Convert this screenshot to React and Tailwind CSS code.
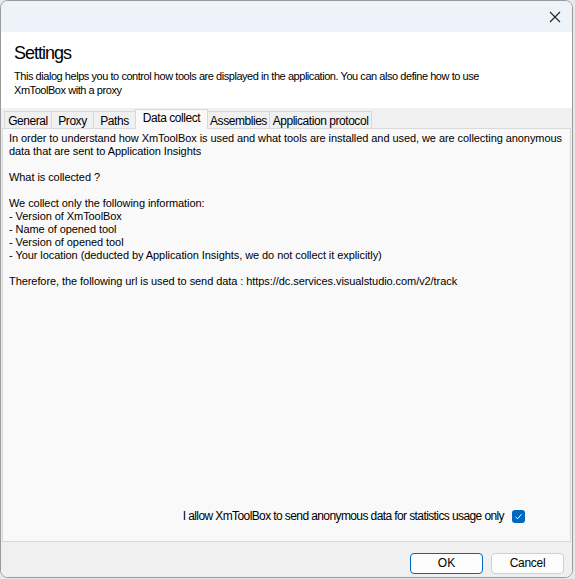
const tabs = [
  { label: "General", w: "w-[48px]" },
  { label: "Proxy", w: "w-[43px]" },
  { label: "Paths", w: "w-[43px]" },
  { label: "Data collect", w: "w-[73px]", active: true },
  { label: "Assemblies", w: "w-[63px]" },
  { label: "Application protocol", w: "w-[103px]" },
];

const lines = [
  "In order to understand how XmToolBox is used and what tools are installed and used, we are collecting anonymous",
  "data that are sent to Application Insights",
  "",
  "What is collected ?",
  "",
  "We collect only the following information:",
  "- Version of XmToolBox",
  "- Name of opened tool",
  "- Version of opened tool",
  "- Your location (deducted by Application Insights, we do not collect it explicitly)",
  "",
  "Therefore, the following url is used to send data : https://dc.services.visualstudio.com/v2/track",
];

export default function App() {
  return (
    <div className="w-[575px] h-[579px] bg-[#e8e8e8] font-['Liberation_Sans',Arial,sans-serif] text-black">
      <div className="w-[573px] h-[578px] flex flex-col rounded-[8px] border border-[#9a9a9a] overflow-hidden bg-white">
        {/* title bar */}
        <div className="h-[31px] bg-[#eef3fa] flex justify-end items-center pr-[10px] shrink-0">
          <svg width="12" height="12" viewBox="0 0 12 12" className="mr-[1px]">
            <path d="M1 1L11 11M11 1L1 11" stroke="#222" strokeWidth="1.1" />
          </svg>
        </div>

        {/* header */}
        <div className="h-[76px] bg-white px-[13px] pt-[9px] shrink-0">
          <div className="text-[18px] leading-[24px] tracking-[-1px]">Settings</div>
          <p className="mt-[4px] text-[11px] leading-[14px] tracking-[-0.45px] w-[470px]">
            This dialog helps you to control how tools are displayed in the application. You can also define how to use XmToolBox with a proxy
          </p>
        </div>

        {/* tabs */}
        <div className="bg-[#f0f0f0] flex-1 flex flex-col pt-[1px] px-[1px]">
          <div className="flex items-end h-[20px] pl-[2px]">
            {tabs.map((t) =>
              t.active ? (
                <div
                  key={t.label}
                  className={`${t.w} h-[20px] bg-[#f9f9f9] border border-b-0 border-[#d9d9d9] text-[12px] leading-[17px] tracking-[-0.45px] text-center -ml-[1px] relative z-10`}
                >
                  {t.label}
                </div>
              ) : (
                <div
                  key={t.label}
                  className={`${t.w} h-[18px] bg-[#f0f0f0] border border-b-0 border-[#d9d9d9] text-[12px] leading-[18px] tracking-[-0.45px] text-center -ml-[1px] first:ml-0`}
                >
                  {t.label}
                </div>
              )
            )}
          </div>

          <div className="h-[414px] bg-[#f9f9f9] border border-[#d9d9d9] flex flex-col pl-[6px] pt-[3px] -mt-[1px]">
            <div className="text-[11px] leading-[13px] tracking-[-0.07px]">
              {lines.map((l, i) => (
                <div key={i} className="h-[13px] whitespace-pre">
                  {l}
                </div>
              ))}
            </div>
            <div className="flex-1" />
            <div className="flex items-center justify-end pr-[45px] pb-[16px] gap-[8px]">
              <span className="text-[12px] tracking-[-0.6px]">I allow XmToolBox to send anonymous data for statistics usage only</span>
              <span className="w-[13px] h-[13px] rounded-[3px] bg-[#0067c0] flex items-center justify-center">
                <svg width="9" height="9" viewBox="0 0 9 9">
                  <path d="M1.5 4.8L3.5 6.8L7.5 2.2" stroke="white" strokeWidth="1" fill="none" />
                </svg>
              </span>
            </div>
          </div>

          {/* footer */}
          <div className="flex justify-end gap-[8px] pr-[7px] pt-[11px]">
            <button className="w-[73px] h-[21px] rounded-[4px] border border-[#0067c0] bg-[#fdfdfd] text-[12px] leading-[19px]">
              OK
            </button>
            <button className="w-[73px] h-[21px] rounded-[4px] border border-[#d0d0d0] bg-[#fdfdfd] text-[12px] leading-[19px] tracking-[-0.3px]">
              Cancel
            </button>
          </div>
        </div>
      </div>
    </div>
  );
}
